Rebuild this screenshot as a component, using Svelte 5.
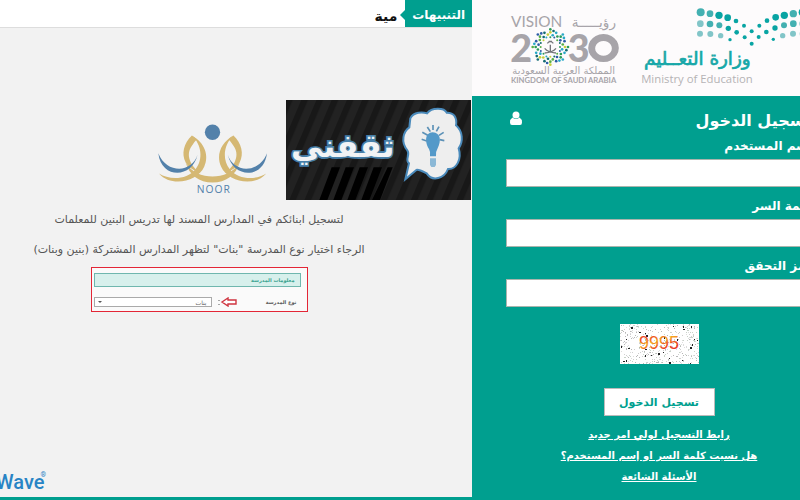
<script>
  const dots = [
    [212, 37, 12, 1], [240, 41, 10, 1], [267, 46, 11, 0], [293, 53, 10, 0], [318, 63, 7, 0], [342, 77, 6, 0], [365, 94, 6, 0],
    [388, 77, 6, 0], [411, 62, 7, 0], [437, 52, 10, 0], [463, 46, 11, 0], [490, 41, 11, 1], [518, 37, 12, 0],
    [211, 71, 10, 2], [240, 72, 10, 1], [268, 76, 9, 1], [295, 85, 8, 0], [320, 97, 7, 0], [344, 112, 6, 0], [365, 131, 6, 0],
    [386, 111, 6, 0], [409, 96, 7, 0], [435, 84, 8, 0], [462, 76, 9, 1], [490, 71, 10, 1], [518, 71, 10, 2],
    [210, 101, 9, 2], [241, 102, 9, 2], [272, 107, 8, 2], [300, 119, 5, 0], [430, 118, 5, 0], [458, 107, 8, 2], [489, 101, 9, 2], [518, 101, 9, 2]
  ];
  const dotColors = ['#08a4a3', '#43b0b1', '#82c5c8'];
  const emblemColors = ['#2b9c59', '#28a9c7', '#c6cf3c', '#146b72', '#57af45', '#2d5ca6'];
  const emblem = [];
  for (let ring = 0; ring < 4; ring++) {
    const count = 16;
    for (let i = 0; i < count; i++) {
      const angle = (i + (ring % 2) / 2) * Math.PI * 2 / count;
      const r = [29, 36, 44, 49][ring] + (ring === 3 ? 0 : i % 2 * 2);
      if (ring === 3 && i % 2) continue;
      emblem.push({ x: 151 + Math.cos(angle) * r, y: 141 + Math.sin(angle) * r, r: [3, 4, 4, 4][ring], c: emblemColors[(i * 5 + ring) % 6] });
    }
  }
  for (let i = 0; i < 8; i++) {
    const angle = i * Math.PI / 4;
    emblem.push({ x: 151 + Math.cos(angle) * 53, y: 141 + Math.sin(angle) * 53, r: 4, c: emblemColors[i % 6] });
  }
  let seed = 17;
  const random = () => (seed = (seed * 16807) % 2147483647) / 2147483647;
  const specks = Array.from({ length: 420 }, () => ({ x: Math.floor(random() * 79), y: Math.floor(random() * 40), c: ['#cfcfcf', '#b7b7b7', '#dcdcdc', '#c8d2c8'][Math.floor(random() * 4)] }));
  const blots = [[11, 3], [53, 2], [63, 2], [63, 5], [71, 2], [25, 9], [26, 11], [6, 15], [1, 22], [8, 24], [72, 20], [77, 16], [38, 29], [43, 28], [25, 31], [3, 37], [6, 36], [49, 34], [49, 38], [62, 36], [70, 39], [19, 8], [57, 15], [74, 15], [70, 23], [31, 31], [44, 13], [25, 25]];
</script>

<div class="page">
  <main>
    <div class="alerts" dir="rtl">
      <h2>التنبيهات</h2>
      <p>مية</p>
    </div>
    <section class="notice">
      <div class="brands">
        <svg class="noor" viewBox="45 40 340 215" role="img" aria-label="Noor">
          <circle cx="215" cy="67" r="23" fill="#5381aa" />
          <g fill="#d5b873">
            <path d="M153 77C128 101 121 132 134 157Q145 178 179 190C148 169 133 135 153 108Q159 97 168 88Z" />
            <path d="M153 77C191 98 206 137 190 171C171 215 91 234 54 191C85 211 137 211 164 178C188 149 182 104 153 77Z" />
            <path d="M278 77C303 101 310 132 297 157Q286 178 252 190C283 169 298 135 278 108Q272 97 263 88Z" />
            <path d="M278 77C240 98 225 137 241 171C260 215 340 234 377 191C346 211 294 211 267 178C243 149 249 104 278 77Z" />
            <path d="M134 157C150 188 185 200 215 200S280 188 297 157C286 196 255 218 215 218S145 196 134 157Z" />
          </g>
          <g fill="#5381aa">
            <path d="M52 130C61 208 153 208 170 135C153 190 77 193 52 130Z" />
            <path d="M261 135C278 208 370 208 379 130C354 193 278 190 261 135Z" />
          </g>
          <text x="219" y="249" text-anchor="middle" font-size="31" letter-spacing="3" fill="#5381aa" font-family="Open Sans, sans-serif">NOOR</text>
        </svg>
        <svg class="banner" viewBox="0 0 555 300" preserveAspectRatio="none" role="img" aria-label="ثقفني">
          <defs>
            <pattern id="stripe" width="42" height="42" patternUnits="userSpaceOnUse" patternTransform="rotate(23)">
              <rect width="42" height="42" fill="#222" /><rect width="19" height="42" fill="#181818" />
            </pattern>
          </defs>
          <rect width="555" height="300" fill="url(#stripe)" />
          <path d="M137 202h25l-38 98h-24zM179 202h25l-38 98h-24zM221 202h25l-38 98h-24zM263 202h25l-38 98h-24zM305 202h15l-38 98h-24z" fill="#000" />
          <text x="170" y="172" text-anchor="middle" direction="rtl" font-size="96" font-weight="bold" font-family="DejaVu Sans, sans-serif" fill="#f1f3f5" stroke="#467fa8" stroke-width="10" paint-order="stroke">ثقفني</text>
          <path d="M373 55C383 35 410 36 423 40C437 22 474 22 482 38C503 37 514 52 510 76C531 94 532 126 518 145C528 177 512 209 486 207C475 235 440 247 422 220C408 213 397 207 391 210L358 238L369 190C355 181 374 164 364 151C343 126 352 94 370 82Z" fill="#eee" stroke="#4a8abb" stroke-width="6" />
          <path d="M440 97C415 98 417 129 429 147Q434 155 432 169H450Q448 156 455 145C466 124 465 98 440 97Z" fill="#5399c9" />
          <path d="M432 175h18v20l-4 6h-10l-4-6z" fill="#8bb8d6" />
          <path d="M407 118l15 5M409 97l16 9M424 81l9 14M441 75v15M459 80l-8 14M473 97l-14 9M475 122l-14-3" stroke="#5c91b7" stroke-width="5" fill="none" />
        </svg>
      </div>
      <div class="message" dir="rtl">
        <p>لتسجيل ابنائكم في المدارس المسند لها تدريس البنين للمعلمات</p>
        <p>الرجاء اختيار نوع المدرسة "بنات" لتظهر المدارس المشتركة (بنين وبنات)</p>
        <div class="school">
          <h3>معلومات المدرسة</h3>
          <div class="choice">
            <label for="school-type">نوع المدرسة</label>
            <svg viewBox="0 0 20 10" aria-hidden="true"><path d="M4 5l6-4v2h8v4h-8v2z" fill="#fff" stroke="#cf3540" stroke-width="1.4" /><path d="M1 3v1M1 7v1" stroke="#555" /></svg>
            <div class="select"><select id="school-type"><option>بنات</option></select></div>
          </div>
        </div>
      </div>
    </section>
    <div class="wave">Wave<span>®</span></div>
  </main>

  <aside>
    <header>
      <svg class="vision" viewBox="0 0 375 285" role="img" aria-label="Vision 2030">
        <g fill="#a7a4a9" font-family="Lato, sans-serif">
          <text x="33" y="82" font-size="46">VISION</text>
          <text x="348" y="81" font-size="41" text-anchor="end" font-family="DejaVu Sans, sans-serif">رؤيـــــة</text>
          <text x="31" y="185" font-size="113" font-weight="900">2</text>
          <text x="203" y="185" font-size="113" font-weight="900">3</text>
          <path fill-rule="evenodd" d="M310 102a46 42 0 1 0 1 0zM311 123a25 22 0 1 1-1 0z" />
          <text x="191" y="221" text-anchor="middle" font-size="30" font-family="DejaVu Sans, sans-serif">المملكة العربية السعودية</text>
          <text x="191" y="249" text-anchor="middle" font-size="23" font-weight="bold">KINGDOM OF SAUDI ARABIA</text>
        </g>
        <circle cx="151" cy="141" r="51" fill="#fdfbfc" />
        {#each emblem as d}<circle cx={d.x} cy={d.y} r={d.r} fill={d.c} />{/each}
        <path d="M151 158v-24M142 130q9-10 18 0M146 124h10M134 145q10 12 34 14M168 145q-10 12-34 14" fill="none" stroke="#737579" stroke-width="4" />
      </svg>
      <svg class="ministry" viewBox="15 0 495 285" role="img" aria-label="Ministry of Education">
        {#each dots as [x, y, r, c]}<circle cx={x} cy={y} {r} fill={dotColors[c]} />{/each}
        <text x="202" y="195" text-anchor="middle" direction="rtl" font-size="55" fill="#16a7a8" stroke="#16a7a8" stroke-width="2" font-family="DejaVu Sans, sans-serif">وزارة التعــليم</text>
        <text x="201" y="249" text-anchor="middle" font-size="34" fill="#b5b3b5" font-family="Open Sans, sans-serif">Ministry of Education</text>
      </svg>
    </header>
    <form dir="rtl" onsubmit={(e) => e.preventDefault()}>
      <div class="title">
        <h1>تسجيل الدخول</h1>
        <svg viewBox="0 0 12 14" aria-hidden="true"><circle cx="6" cy="4" r="3.5" fill="#fff" /><path d="M2.5 6.5Q6 9.5 9.5 6.5Q12 8 12 11.5Q12 14 10 14H2Q0 14 0 11.5Q0 8 2.5 6.5Z" fill="#fff" /></svg>
      </div>
      <label for="user">إسم المستخدم</label>
      <input id="user" type="text" />
      <label for="password">كلمة السر</label>
      <input id="password" type="password" />
      <label for="code">رمز التحقق</label>
      <input id="code" type="text" />
      <svg class="captcha" viewBox="0 0 79 40" role="img" aria-label="9995">
        <defs><linearGradient id="warm" x2=".3" y2=".5" spreadMethod="reflect"><stop stop-color="#e83222" /><stop offset=".6" stop-color="#ee5a1e" /><stop offset="1" stop-color="#f5a51d" /></linearGradient></defs>
        <rect width="79" height="40" fill="#fff" />
        {#each specks as s}<rect x={s.x} y={s.y} width="1" height="1" fill={s.c} />{/each}
        {#each blots as [x, y], i}<rect {x} {y} width={i % 3 ? 1 : 2} height={i % 2 ? 1 : 2} fill="#222" />{/each}
        <text x="39" y="25" text-anchor="middle" font-size="18" font-family="Liberation Sans, sans-serif" fill="url(#warm)" direction="ltr">9995</text>
      </svg>
      <button type="submit">تسجيل الدخول</button>
      <nav>
        <a href="#register">رابط التسجيل لولي امر جديد</a>
        <a href="#forgot">هل نسيت كلمة السر او إسم المستخدم؟</a>
        <a href="#faq">الأسئلة الشائعة</a>
      </nav>
    </form>
  </aside>
</div>

<style>
  * { box-sizing: border-box; }
  :global(body) { background: #f2f2f2; }
  h1, h2, h3, p { margin: 0; }
  svg { display: block; flex: none; }
  .page {
    display: grid;
    grid-template-columns: 59fr 41fr;
    min-height: 100vh;
    overflow: hidden;
    border-bottom: 3px solid #009f8f;
    font-family: "DejaVu Sans", sans-serif;
  }
  main { display: flex; flex-direction: column; min-width: 0; }
  .alerts { display: flex; height: 28px; background: #fff; border-bottom: 1px solid #ddd; }
  .alerts h2 {
    position: relative;
    padding: 0 7px;
    background: #009f8f;
    color: #fff;
    font-size: 12px;
    line-height: 30px;
  }
  .alerts h2::after {
    content: "";
    position: absolute;
    right: 100%;
    top: 10px;
    border: 5px solid transparent;
    border-left-width: 0;
    border-right-color: #009f8f;
  }
  .alerts p { padding: 0 8px; font-size: 14px; line-height: 32px; font-weight: bold; color: #111; }
  .notice { padding-top: 72px; }
  .brands { display: flex; justify-content: flex-end; gap: 17px; padding-right: 1px; }
  .noor { width: 113px; height: 72px; margin-top: 23px; }
  .banner { width: 185px; height: 100px; }
  .message { padding-right: 74px; display: flex; flex-direction: column; align-items: center; color: #555; }
  .message p { font-size: 11px; line-height: 30px; white-space: nowrap; }
  .message p:first-child { margin-top: 5px; }
  .school { width: 217px; height: 45px; margin-top: 2px; padding: 5px 6px 0 2px; border: 1px solid #e32636; background: #fafafa; }
  .school h3 { padding: 0 5px; border: 1px solid #6fb7ae; background: #d7f0ec; color: #36a08e; font-size: 5px; line-height: 12px; }
  .choice { display: flex; align-items: center; margin-top: 10px; padding-right: 4px; font-size: 5px; font-weight: bold; }
  .choice label { margin-left: auto; }
  .choice svg { width: 20px; height: 10px; }
  .select { position: relative; width: 118px; margin-right: 6px; }
  .select::after { content: ""; position: absolute; left: 4px; top: 4px; border: 2px solid transparent; border-top-color: #555; }
  .select select { display: block; width: 100%; height: 10px; padding: 0 4px; appearance: none; border: 1px solid #aaa; border-radius: 0; background: #fff; color: #666; font: 6px "DejaVu Sans", sans-serif; }
  .wave { display: flex; margin-top: auto; margin-left: -4px; padding-bottom: 3px; color: #2884c5; font: 500 20px/24px Roboto, sans-serif; }
  .wave span { margin-left: -4px; font-size: 7px; line-height: 10px; }
  aside { min-width: 0; background: #009f8f; color: #fff; overflow: hidden; }
  header { display: flex; gap: 10px; height: 96px; padding-left: 28px; background: #fdfbfc; }
  .vision { width: 125px; height: 95px; }
  .ministry { width: 165px; height: 95px; }
  form { display: flex; flex-direction: column; width: 306px; margin-left: 34px; }
  .title { display: flex; justify-content: space-between; align-items: center; height: 40px; padding: 10px 0 0 4px; }
  .title svg { width: 12px; height: 14px; margin-bottom: 6px; }
  h1 { font-size: 16px; line-height: 24px; }
  form label { height: 23px; font-size: 12px; line-height: 20px; font-weight: bold; }
  form input { width: 100%; height: 28px; padding: 0 8px; border: 1px solid #a9b5ad; border-radius: 0; background: #fff; }
  form input + label { margin-top: 9px; }
  .captcha { width: 79px; height: 40px; margin: 17px auto 0; }
  button { align-self: center; width: 111px; height: 28px; margin-top: 24px; padding: 0; border: 1px solid #bbb; background: #fff; color: #009f8f; font: bold 11px "DejaVu Sans", sans-serif; }
  nav { display: flex; flex-direction: column; align-items: center; margin-top: 8px; }
  nav a { color: #fff; font-size: 10px; line-height: 21px; font-weight: bold; white-space: nowrap; }
</style>
